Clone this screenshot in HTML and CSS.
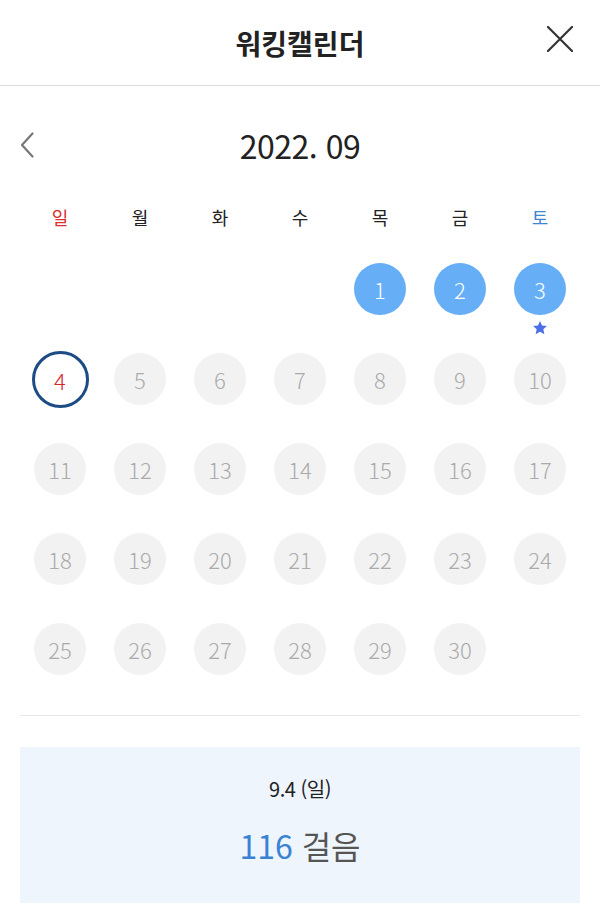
FILE: index.html
```html
<!DOCTYPE html>
<html lang="ko">
<head>
  <meta charset="UTF-8">
  <meta name="viewport" content="width=device-width, initial-scale=1.0">
  <title>워킹캘린더</title>
  <link rel="stylesheet" href="styles.css">
</head>
<body>
  <div class="header">
    <h1 class="header-title">워킹캘린더</h1>
    <button class="close-button" aria-label="닫기">
      <svg width="26" height="26" viewBox="0 0 26 26">
        <path d="M1 1 L25 25 M25 1 L1 25" stroke="#333" stroke-width="2.2" stroke-linecap="round" fill="none"/>
      </svg>
    </button>
  </div>

  <div class="calendar">
    <div class="month-row">
      <button class="prev-button" aria-label="이전 달">
        <svg width="14" height="26" viewBox="0 0 14 26">
          <path d="M12.5 1.5 L2 13 L12.5 24.5" stroke="#777" stroke-width="2.2" stroke-linecap="round" stroke-linejoin="round" fill="none"/>
        </svg>
      </button>
      <h2 class="month-title">2022. 09</h2>
    </div>

    <div class="weekdays">
      <span class="sun">일</span>
      <span>월</span>
      <span>화</span>
      <span>수</span>
      <span>목</span>
      <span>금</span>
      <span class="sat">토</span>
    </div>

    <div class="days">
      <div class="day"></div>
      <div class="day"></div>
      <div class="day"></div>
      <div class="day"></div>
      <div class="day"><span class="circle walked">1</span></div>
      <div class="day"><span class="circle walked">2</span></div>
      <div class="day">
        <span class="circle walked">3</span>
        <svg class="star" width="16" height="16" viewBox="0 0 24 24">
          <path d="M12 1.5 L15.1 8.2 L22.4 9 L17 14 L18.5 21.3 L12 17.6 L5.5 21.3 L7 14 L1.6 9 L8.9 8.2 Z" fill="#4f6fe8"/>
        </svg>
      </div>
      <div class="day"><span class="circle today">4</span></div>
      <div class="day"><span class="circle">5</span></div>
      <div class="day"><span class="circle">6</span></div>
      <div class="day"><span class="circle">7</span></div>
      <div class="day"><span class="circle">8</span></div>
      <div class="day"><span class="circle">9</span></div>
      <div class="day"><span class="circle">10</span></div>
      <div class="day"><span class="circle">11</span></div>
      <div class="day"><span class="circle">12</span></div>
      <div class="day"><span class="circle">13</span></div>
      <div class="day"><span class="circle">14</span></div>
      <div class="day"><span class="circle">15</span></div>
      <div class="day"><span class="circle">16</span></div>
      <div class="day"><span class="circle">17</span></div>
      <div class="day"><span class="circle">18</span></div>
      <div class="day"><span class="circle">19</span></div>
      <div class="day"><span class="circle">20</span></div>
      <div class="day"><span class="circle">21</span></div>
      <div class="day"><span class="circle">22</span></div>
      <div class="day"><span class="circle">23</span></div>
      <div class="day"><span class="circle">24</span></div>
      <div class="day"><span class="circle">25</span></div>
      <div class="day"><span class="circle">26</span></div>
      <div class="day"><span class="circle">27</span></div>
      <div class="day"><span class="circle">28</span></div>
      <div class="day"><span class="circle">29</span></div>
      <div class="day"><span class="circle">30</span></div>
      <div class="day"></div>
    </div>

    <hr class="divider">

    <div class="summary">
      <div class="summary-date">9.4 (일)</div>
      <div class="summary-steps"><span class="steps-count">116</span> 걸음</div>
    </div>
  </div>
</body>
</html>
```

FILE: styles.css
```css
body {
  margin: 0;
  padding: 0;
  background-color: #fff;
  font-family: "Noto Sans CJK KR", "Noto Sans", sans-serif;
  color: #222;
  overflow: hidden;
}

button {
  border: none;
  background: none;
  padding: 0;
  cursor: pointer;
}

.header {
  position: relative;
  height: 85px;
  border-bottom: 1px solid #dcdcdc;
  display: flex;
  align-items: center;
  justify-content: center;
}

.header-title {
  margin: 0;
  font-size: 28px;
  font-weight: 700;
  color: #222;
}

.close-button {
  position: absolute;
  right: 27px;
  top: 26px;
  width: 26px;
  height: 26px;
}

.calendar {
  padding: 0 20px;
}

.month-row {
  position: relative;
  margin-top: 29px;
  height: 60px;
  display: flex;
  align-items: center;
  justify-content: center;
}

.prev-button {
  position: absolute;
  left: 0;
  top: 17px;
  width: 14px;
  height: 26px;
}

.month-title {
  margin: 0;
  font-size: 32px;
  font-weight: 400;
  letter-spacing: -0.5px;
  color: #222;
}

.weekdays {
  margin-top: 22px;
  height: 40px;
  display: grid;
  grid-template-columns: repeat(7, 1fr);
  align-items: center;
  text-align: center;
  font-size: 18px;
  color: #222;
}

.weekdays .sun {
  color: #d93030;
}

.weekdays .sat {
  color: #3f86d4;
}

.days {
  margin-top: 27px;
  display: grid;
  grid-template-columns: repeat(7, 1fr);
  grid-auto-rows: 90px;
}

.day {
  position: relative;
  display: flex;
  justify-content: center;
}

.circle {
  width: 52px;
  height: 52px;
  margin-top: -1px;
  border-radius: 50%;
  background-color: #f2f2f2;
  color: #aaa;
  font-size: 22px;
  font-weight: 300;
  display: flex;
  align-items: center;
  justify-content: center;
}

.circle.walked {
  background-color: #66aef5;
  color: #fff;
}

.circle.today {
  width: 51px;
  height: 51px;
  margin-top: -3px;
  background-color: #fff;
  border: 3px solid #1d4c84;
  color: #d7282a;
}

.star {
  position: absolute;
  top: 56px;
  left: 50%;
  margin-left: -8px;
}

.divider {
  margin: 1px 0 0;
  border: none;
  border-top: 1px solid #e6e6e6;
}

.summary {
  margin-top: 31px;
  height: 200px;
  background-color: #eff5fc;
  text-align: center;
  padding-top: 27px;
  box-sizing: border-box;
}

.summary-date {
  font-size: 20px;
  line-height: 30px;
  color: #222;
  letter-spacing: -0.5px;
}

.summary-steps {
  margin-top: 19px;
  font-size: 32px;
  line-height: 44px;
  color: #555;
}

.steps-count {
  color: #3a83d2;
}
```
